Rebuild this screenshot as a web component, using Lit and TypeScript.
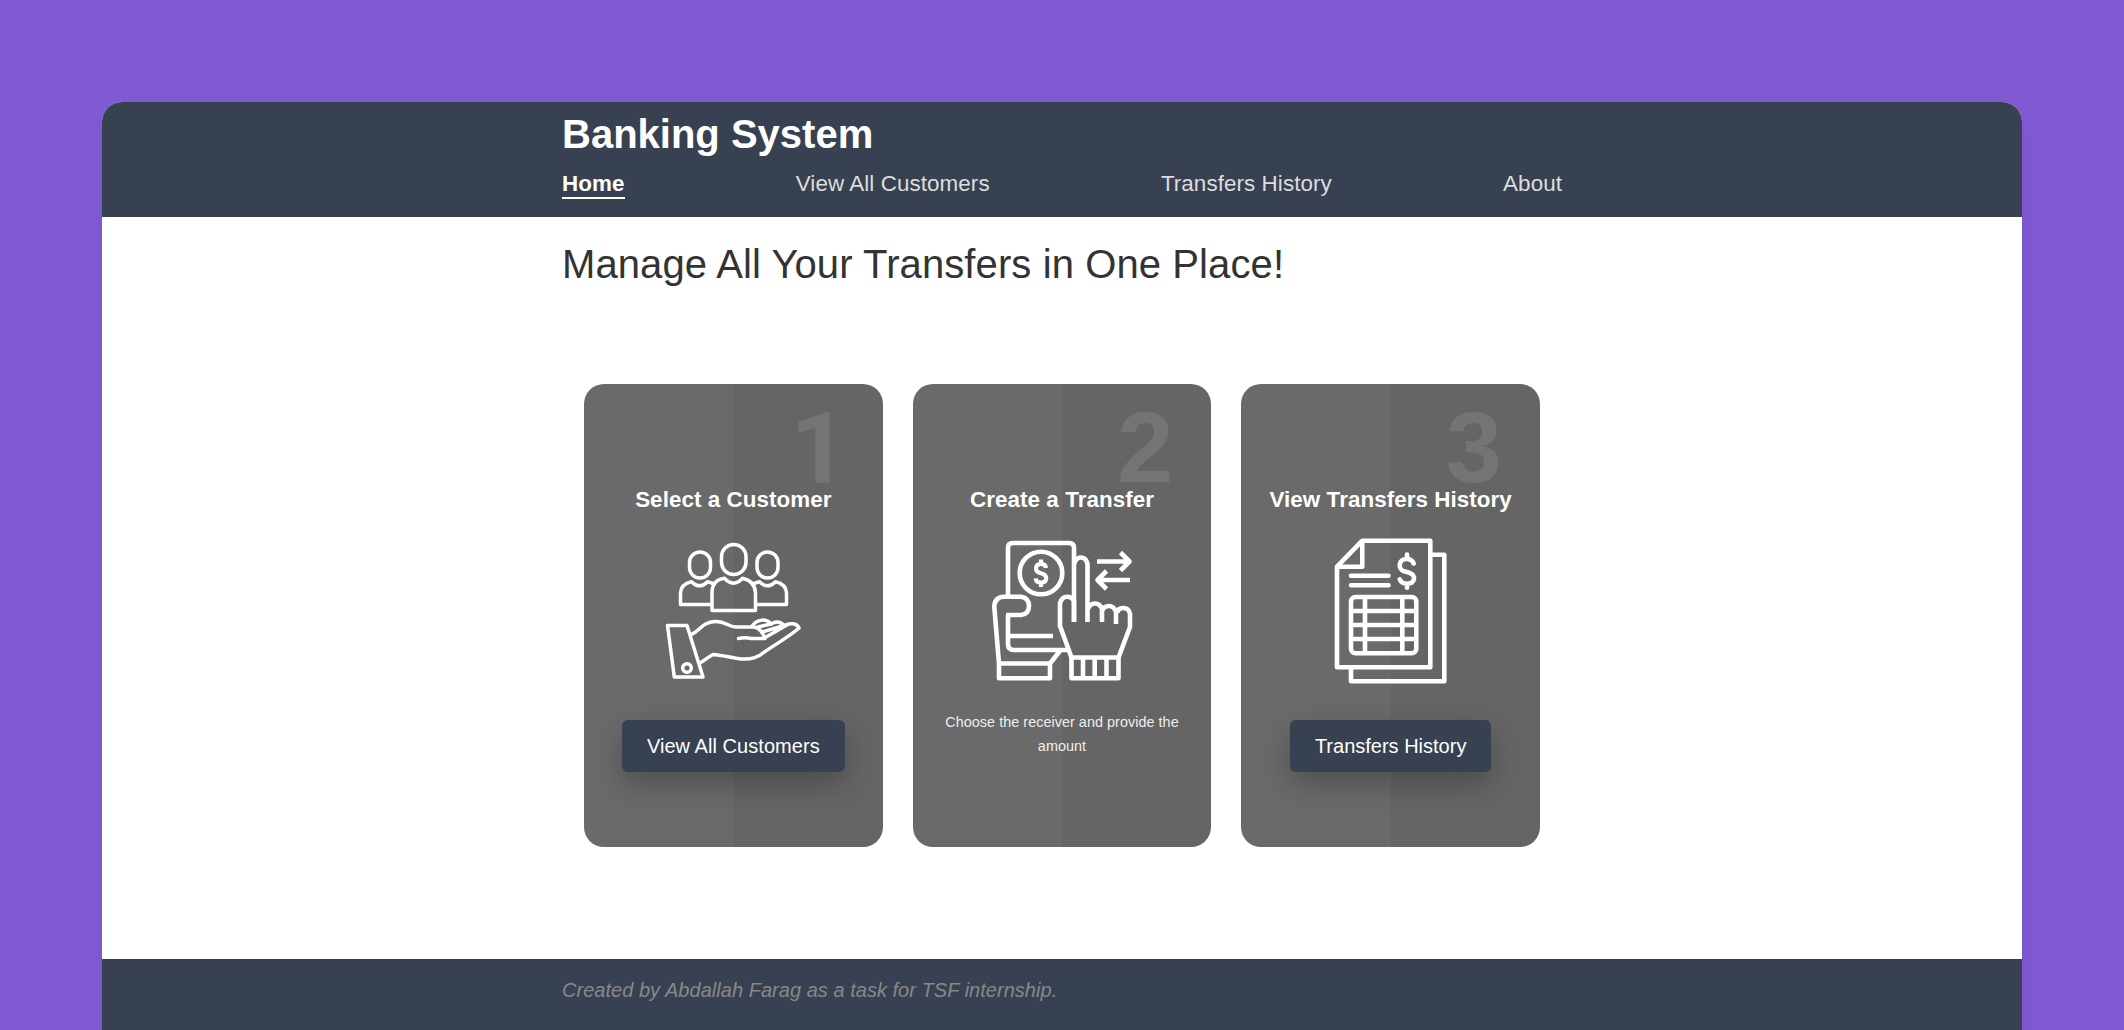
import { LitElement, html, css, svg } from "lit";
import { customElement } from "lit/decorators.js";

const customersIcon = svg`
<svg class="icon" viewBox="0 0 170 165" fill="none" stroke="#fff" stroke-width="3.500" stroke-linejoin="round" stroke-linecap="round">
  <rect x="39.500" y="22" width="21" height="26" rx="10.500"/>
  <rect x="107" y="22" width="21" height="26" rx="10.500"/>
  <rect x="71.500" y="14.500" width="24.500" height="30" rx="12.250"/>
  <path d="M61 74.500H30.500V63Q31 54 41.500 51.700Q49.500 60 57.500 51.700L63 53.500"/>
  <path d="M106 74.500H136.500V63Q136 54 125.500 51.700Q117.500 60 109.500 51.700L104 53.500"/>
  <path d="M62 80.500V63Q62 50 74.500 48.300Q83.500 58 92.500 48.300Q105 51 105.500 63V80.500Z"/>
  <path d="M17.500 95.500H37L53 147H24.300Z"/>
  <circle cx="37" cy="138" r="4.300"/>
  <path d="M42 104C50 101 52 92 65 91.500C76 91 78 97 86 97H104C110 98 113 103 115 108.500H101Q95 107 88.500 108.500"/>
  <path d="M102 96C108 88 117 89 121 94C126 91 130 91 134 95.500C140 92.500 147 93 149 98C139 107 124 115 113 123C107 128 100 129.500 92 129C82 128 72 125 63 124.500C58 127 54 131 50 133"/>
  <path d="M108 97L121 94M112 102L134 95.500M116 107L137 95"/>
</svg>`;

const transferIcon = svg`
<svg class="icon" viewBox="0 0 180 170" fill="none" stroke="#fff" stroke-width="4.600" stroke-linejoin="round">
  <path d="M38 71V23Q38 18 43 18H99Q104 18 104 23V97"/>
  <circle cx="71" cy="48" r="21.300"/>
  <path d="M76 43Q75.500 38.800 71 38.800T66 43.300Q66 47 71 48.200T76.200 53.300Q76 57.500 71 57.500T65.800 53.300M71 34.500V39M71 57V62" stroke-width="4.200"/>
  <path d="M36 90H51Q59 89 59 81T51 71.700H34Q24.500 72 24.300 82L29 138.500V153.300H80V138.500L91 124.500"/>
  <path d="M29 138.500H80M38 90V119Q38 125 44 125H98M40 111H83"/>
  <path d="M104 97V76Q102 71.700 97 71.700T90 78V101L101.500 132.500H148.500L160 102V89Q159 83 153.300 83T147.500 88"/>
  <path d="M104 39Q106 32.500 111 32.500T117.500 39V97M118 84Q120 78.500 125 78.500T132 84V97M132 86Q134 81 139 81T146 87V99"/>
  <path d="M101.500 132.500V153.300H148.500V132.500M113 133V153M124.700 133V153M136.500 133V153"/>
  <path d="M127 36.500H159M150.500 27.500L159.500 36.500L150.500 45.500M160 55H128M136.500 46L127.500 55L136.500 64"/>
</svg>`;

const historyIcon = svg`
<svg class="icon" viewBox="0 0 160 170" fill="none" stroke="#fff" stroke-width="4.600" stroke-linejoin="round">
  <path d="M52.300 15.700H120.300V142.300H27V41.700ZM52.300 16V41.700H27.500"/>
  <path d="M121 29.800H134.300V156.300H41V143"/>
  <path d="M41 50.800H78.500M41 60.300H78.500M103.700 38.500Q102 34 96.500 34C88.500 34 87.500 44 94 46.300L99.500 47.800C106.500 50.500 105 58.500 97 58.700Q91.500 58.500 89.700 54.300M97 29.500V33.500M97 59V62.700" stroke-linecap="round"/>
  <rect x="41" y="72" width="65.300" height="56.300" rx="4.500"/>
  <path d="M55 72V128.300M92.300 72V128.300M41 86H106.300M41 100H106.300M41 114H106.300"/>
</svg>`;

@customElement("app-root")
export class AppRoot extends LitElement {
  static styles = css`
    :host {
      display: block;
      box-sizing: border-box;
      height: 1030px;
      overflow: hidden;
      padding: 102px 102px 0;
      background: #805ad5;
      font-family: "Liberation Sans", Arial, sans-serif;
      color: #333;
    }
    .page {
      height: 1100px;
      border-radius: 20px;
      background: #fff;
      box-shadow: 0 20px 25px -5px rgba(0, 0, 0, 0.1), 0 10px 10px -5px rgba(0, 0, 0, 0.04);
    }
    .inner { width: 1000px; margin: 0 auto; }
    header {
      height: 115px;
      background: #374151;
      border-radius: 20px 20px 0 0;
    }
    h1 { margin: 0; padding-top: 9px; font-size: 40px; line-height: 46px; color: #fff; }
    nav {
      display: flex;
      justify-content: space-between;
      padding-top: 14px;
      font-size: 22.4px;
      line-height: 26px;
      letter-spacing: 0.08px;
    }
    nav a { color: #ddd; height: 26px; }
    nav .active { color: #fff; font-weight: bold; border-bottom: 2px solid #fff; }
    main { height: 742px; }
    h2 {
      margin: 0;
      padding-top: 24px;
      font-size: 40px;
      font-weight: normal;
      line-height: 46px;
      letter-spacing: 0.1px;
    }
    .cards {
      display: grid;
      grid-template-columns: repeat(3, 1fr);
      gap: 30px;
      padding: 97px 22px 0;
    }
    .card {
      position: relative;
      box-sizing: border-box;
      height: 463px;
      padding-top: 103px;
      border-radius: 20px;
      background: linear-gradient(90deg, #6a6a6a 50%, #656565 50%);
      color: #fff;
      display: flex;
      flex-direction: column;
      align-items: center;
    }
    .card.history { background: linear-gradient(90deg, #6a6a6a calc(50% + 1px), #656565 calc(50% + 1px)); }
    .number {
      position: absolute;
      top: 23px;
      right: 38px;
      font-size: 101px;
      line-height: 80px;
      font-weight: bold;
      color: rgba(255, 255, 255, 0.1);
    }
    .customers .number { font-family: Roboto, "Liberation Sans", sans-serif; font-size: 100px; top: 25px; right: 35px; }
    h3 {
      position: relative;
      margin: 0;
      font-size: 22.4px;
      line-height: 26px;
      letter-spacing: 0.06px;
      white-space: nowrap;
    }
    .art { height: 207px; display: flex; justify-content: center; padding-top: 12px; box-sizing: border-box; }
    .icon { display: block; flex: none; }
    .customers .icon { width: 170px; height: 165px; margin: 5px 0 0 3px; }
    .transfer .icon { width: 180px; height: 170px; margin-right: 4px; }
    .history .icon { width: 160px; height: 170px; margin-right: 2px; }
    .button {
      padding: 0 25px;
      height: 52px;
      border-radius: 6px;
      background: #374151;
      font-size: 20px;
      line-height: 53px;
      letter-spacing: 0.05px;
      box-shadow: 0 12px 30px rgba(0, 0, 0, 0.25);
    }
    .history .button { letter-spacing: 0; }
    .note {
      margin: -10px 20px 0;
      font-size: 14.4px;
      line-height: 24.48px;
      letter-spacing: 0.04px;
      text-align: center;
      color: #eee;
    }
    footer { height: 200px; background: #374151; color: #888; font-style: italic; }
    footer p { margin: 0; padding-top: 20px; font-size: 20px; line-height: 23px; letter-spacing: 0.03px; }
  `;

  render() {
    return html`
      <div class="page">
        <header>
          <div class="inner">
            <h1>Banking System</h1>
            <nav>
              <a class="active">Home</a>
              <a>View All Customers</a>
              <a>Transfers History</a>
              <a>About</a>
            </nav>
          </div>
        </header>
        <main class="inner">
          <h2>Manage All Your Transfers in One Place!</h2>
          <div class="cards">
            <div class="card customers">
              <span class="number">1</span>
              <h3>Select a Customer</h3>
              <div class="art">${customersIcon}</div>
              <a class="button">View All Customers</a>
            </div>
            <div class="card transfer">
              <span class="number">2</span>
              <h3>Create a Transfer</h3>
              <div class="art">${transferIcon}</div>
              <p class="note">Choose the receiver and provide the amount</p>
            </div>
            <div class="card history">
              <span class="number">3</span>
              <h3>View Transfers History</h3>
              <div class="art">${historyIcon}</div>
              <a class="button">Transfers History</a>
            </div>
          </div>
        </main>
        <footer>
          <div class="inner"><p>Created by Abdallah Farag as a task for TSF internship.</p></div>
        </footer>
      </div>
    `;
  }
}
